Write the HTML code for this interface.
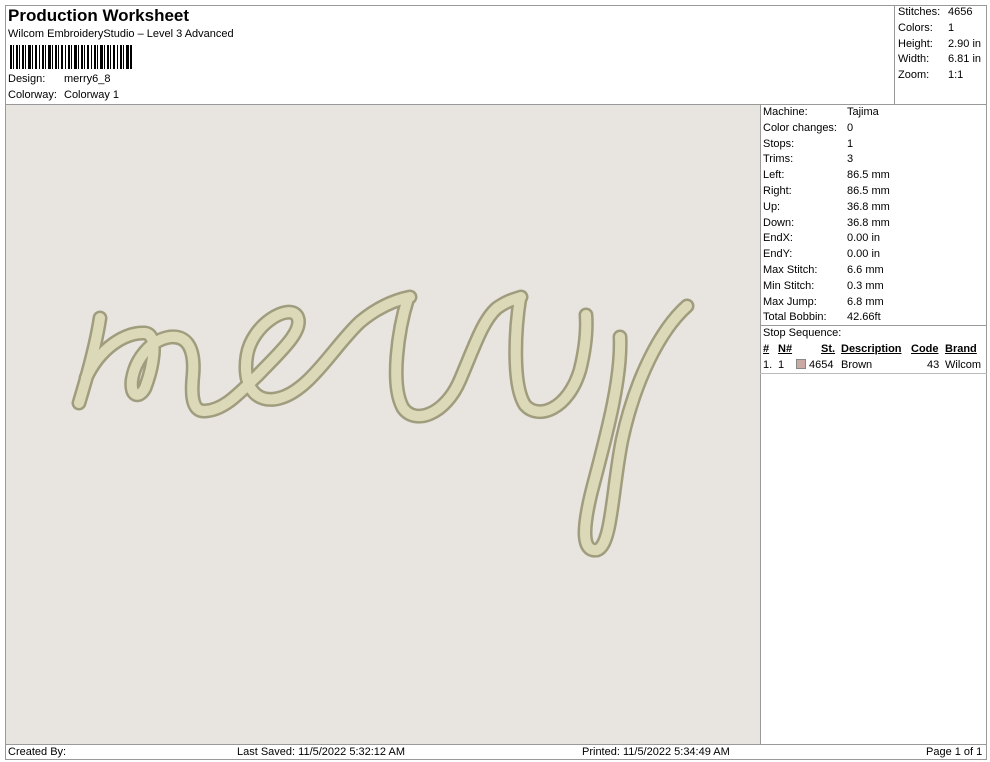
<!DOCTYPE html>
<html><head><meta charset="utf-8"><style>
*{margin:0;padding:0;box-sizing:border-box}
body{width:990px;height:762px;background:#fff;font-family:"Liberation Sans",Arial,sans-serif;font-size:11px;color:#000;position:relative;overflow:hidden}
.abs{position:absolute}
.line{position:absolute;background:#999}
td{padding:0;font-size:11px;line-height:15.8px;white-space:nowrap}
</style></head><body>
<div class="abs" style="left:5px;top:5px;width:982px;height:755px;border:1px solid #999"></div>
<div class="line" style="left:5px;top:104px;width:982px;height:1px"></div>
<div class="line" style="left:894px;top:5px;width:1px;height:100px"></div>
<div class="line" style="left:760px;top:104px;width:1px;height:640px"></div>
<div class="line" style="left:5px;top:744px;width:982px;height:1px"></div>
<div class="abs" style="left:6px;top:105px;width:754px;height:639px;background:#e8e5e0"></div>

<div class="abs" style="left:8px;top:6px;font-size:17px;font-weight:bold">Production Worksheet</div>
<div class="abs" style="left:8px;top:28px">Wilcom EmbroideryStudio – Level 3 Advanced</div>
<svg class="abs" style="left:10px;top:45px" width="124" height="24"><g fill="#000">
<rect x="0" width="2" height="24"/><rect x="3" width="1" height="24"/><rect x="6" width="2" height="24"/><rect x="9" width="1" height="24"/><rect x="12" width="2" height="24"/><rect x="15" width="1" height="24"/><rect x="18" width="3" height="24"/><rect x="22" width="1" height="24"/><rect x="25" width="2" height="24"/><rect x="29" width="1" height="24"/><rect x="32" width="2" height="24"/><rect x="35" width="1" height="24"/><rect x="38" width="3" height="24"/><rect x="42" width="1" height="24"/><rect x="45" width="2" height="24"/><rect x="48" width="1" height="24"/><rect x="51" width="2" height="24"/><rect x="55" width="1" height="24"/><rect x="58" width="2" height="24"/><rect x="61" width="1" height="24"/><rect x="64" width="3" height="24"/><rect x="68" width="1" height="24"/><rect x="71" width="2" height="24"/><rect x="74" width="1" height="24"/><rect x="77" width="2" height="24"/><rect x="81" width="1" height="24"/><rect x="84" width="2" height="24"/><rect x="87" width="1" height="24"/><rect x="90" width="3" height="24"/><rect x="94" width="1" height="24"/><rect x="97" width="2" height="24"/><rect x="100" width="1" height="24"/><rect x="103" width="2" height="24"/><rect x="107" width="1" height="24"/><rect x="110" width="2" height="24"/><rect x="113" width="1" height="24"/><rect x="116" width="3" height="24"/><rect x="120" width="2" height="24"/></g></svg>
<div class="abs" style="left:8px;top:73px">Design:</div><div class="abs" style="left:64px;top:73px">merry6_8</div>
<div class="abs" style="left:8px;top:89px">Colorway:</div><div class="abs" style="left:64px;top:89px">Colorway 1</div>

<table class="abs" style="left:898px;top:5px;border-collapse:collapse">
<tr><td style="width:50px">Stitches:</td><td>4656</td></tr>
<tr><td>Colors:</td><td>1</td></tr>
<tr><td>Height:</td><td>2.90 in</td></tr>
<tr><td>Width:</td><td>6.81 in</td></tr>
<tr><td>Zoom:</td><td>1:1</td></tr></table>

<table class="abs" style="left:763px;top:105px;border-collapse:collapse">
<tr><td style="width:84px">Machine:</td><td>Tajima</td></tr>
<tr><td>Color changes:</td><td>0</td></tr>
<tr><td>Stops:</td><td>1</td></tr>
<tr><td>Trims:</td><td>3</td></tr>
<tr><td>Left:</td><td>86.5 mm</td></tr>
<tr><td>Right:</td><td>86.5 mm</td></tr>
<tr><td>Up:</td><td>36.8 mm</td></tr>
<tr><td>Down:</td><td>36.8 mm</td></tr>
<tr><td>EndX:</td><td>0.00 in</td></tr>
<tr><td>EndY:</td><td>0.00 in</td></tr>
<tr><td>Max Stitch:</td><td>6.6 mm</td></tr>
<tr><td>Min Stitch:</td><td>0.3 mm</td></tr>
<tr><td>Max Jump:</td><td>6.8 mm</td></tr>
<tr><td>Total Bobbin:</td><td>42.66ft</td></tr></table>
<div class="line" style="left:760px;top:325px;width:227px;height:1px"></div>
<div class="abs" style="left:763px;top:327px">Stop Sequence:</div>
<div class="abs" style="left:763px;top:343px;font-weight:bold;text-decoration:underline">#</div>
<div class="abs" style="left:778px;top:343px;font-weight:bold;text-decoration:underline">N#</div>
<div class="abs" style="left:821px;top:343px;font-weight:bold;text-decoration:underline">St.</div>
<div class="abs" style="left:841px;top:343px;font-weight:bold;text-decoration:underline">Description</div>
<div class="abs" style="left:911px;top:343px;font-weight:bold;text-decoration:underline">Code</div>
<div class="abs" style="left:945px;top:343px;font-weight:bold;text-decoration:underline">Brand</div>
<div class="abs" style="left:763px;top:359px">1.</div>
<div class="abs" style="left:778px;top:359px">1</div>
<div class="abs" style="left:796px;top:359px;width:10px;height:10px;background:#c9aaa4;border:1px solid #888"></div>
<div class="abs" style="left:809px;top:359px">4654</div>
<div class="abs" style="left:841px;top:359px">Brown</div>
<div class="abs" style="left:927px;top:359px">43</div>
<div class="abs" style="left:945px;top:359px">Wilcom</div>
<div class="line" style="left:760px;top:373px;width:227px;height:1px;background:#bbb"></div>

<svg class="abs" style="left:0;top:0" width="990" height="762" fill="none" stroke-linecap="round" stroke-linejoin="round">
<g stroke="#a09c7e" stroke-width="15">
<path d="M100,318 C96,345 86,380 79,403"/>
<path d="M86,378 C100,348 125,332 145,333 C160,335 152,370 145,388 C140,398 130,398 132,380 C135,360 150,340 170,337 C188,335 195,350 193,375 C191,395 192,412 205,411 C225,410 240,392 258,375 C280,352 305,330 297,316 C288,303 252,325 247,355 C242,385 255,405 280,398 C310,390 335,345 360,322 C378,307 395,300 410,297"/>
<path d="M408,298 C398,330 390,385 403,408 C415,425 445,415 460,380 C475,345 483,320 497,308 C507,301 512,300 521,297"/>
<path d="M520,298 C515,330 512,385 525,405 C538,420 568,410 580,370 C585,350 587,330 586,315"/>
<path d="M620,337 C622,380 605,440 592,490 C582,530 582,552 597,550 C612,545 612,490 622,440 C635,380 660,330 687,306"/>
</g>
<g stroke="#dcd9b8" stroke-width="10">
<path d="M100,318 C96,345 86,380 79,403"/>
<path d="M86,378 C100,348 125,332 145,333 C160,335 152,370 145,388 C140,398 130,398 132,380 C135,360 150,340 170,337 C188,335 195,350 193,375 C191,395 192,412 205,411 C225,410 240,392 258,375 C280,352 305,330 297,316 C288,303 252,325 247,355 C242,385 255,405 280,398 C310,390 335,345 360,322 C378,307 395,300 410,297"/>
<path d="M408,298 C398,330 390,385 403,408 C415,425 445,415 460,380 C475,345 483,320 497,308 C507,301 512,300 521,297"/>
<path d="M520,298 C515,330 512,385 525,405 C538,420 568,410 580,370 C585,350 587,330 586,315"/>
<path d="M620,337 C622,380 605,440 592,490 C582,530 582,552 597,550 C612,545 612,490 622,440 C635,380 660,330 687,306"/>
</g>
</svg>

<div class="abs" style="left:8px;top:746px">Created By:</div>
<div class="abs" style="left:237px;top:746px">Last Saved: 11/5/2022 5:32:12 AM</div>
<div class="abs" style="left:582px;top:746px">Printed: 11/5/2022 5:34:49 AM</div>
<div class="abs" style="left:926px;top:746px">Page 1 of 1</div>
</body></html>
